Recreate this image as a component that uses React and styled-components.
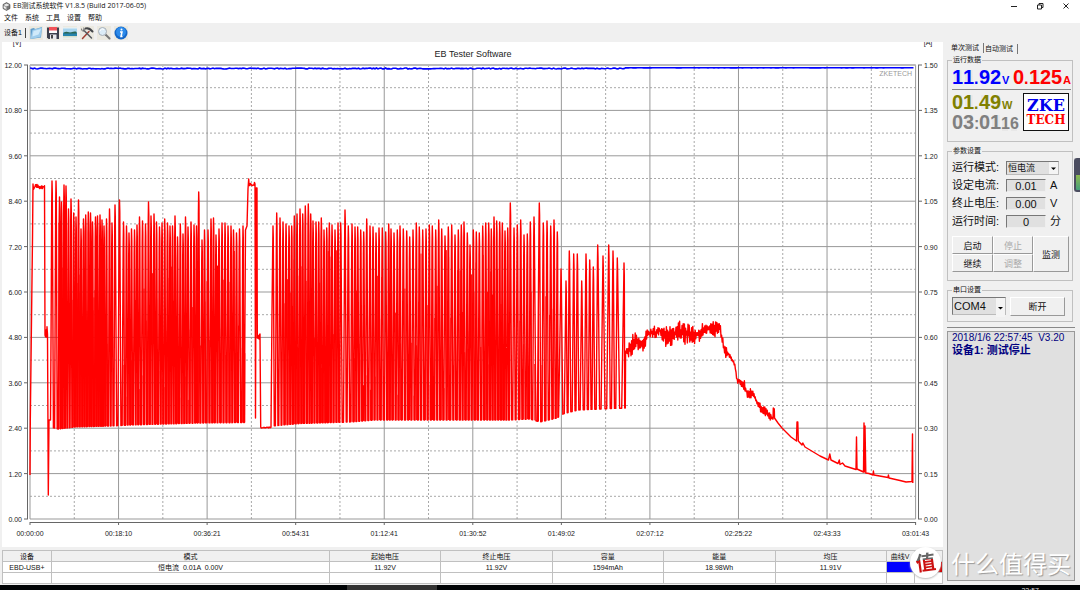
import React, { useState } from "react";
import styled, { createGlobalStyle } from "styled-components";

const GlobalStyle = createGlobalStyle`
  * {
    box-sizing: border-box;
  }

  body {
    margin: 0;
    background: #f0f0f0;
    color: #111;
    font-family: "Liberation Sans", "Noto Sans CJK SC", sans-serif;
    font-size: 7px;
    line-height: 10px;
  }

  button, input, select {
    font-family: inherit;
    color: inherit;
    margin: 0;
    padding: 0;
  }
`;

const MENU = ["文件", "系统", "工具", "设置", "帮助"];

const TIMES = [
  "00:00:00", "00:18:10", "00:36:21", "00:54:31", "01:12:41", "01:30:52",
  "01:49:02", "02:07:12", "02:25:22", "02:43:33", "03:01:43"
];

const COLUMNS = [
  { title: "设备", width: "5.2%", value: "EBD-USB+" },
  { title: "模式", width: "29.6%", value: "恒电流  0.01A  0.00V" },
  { title: "起始电压", width: "11.8%", value: "11.92V" },
  { title: "终止电压", width: "11.9%", value: "11.92V" },
  { title: "容量", width: "11.8%", value: "1594mAh" },
  { title: "能量", width: "11.9%", value: "18.98Wh" },
  { title: "均压", width: "11.8%", value: "11.91V" },
  { title: "曲线V", width: "3%", color: "#0000ff" },
  { title: "", width: "3%", color: "#d00000" }
];

// ---- chart geometry ----
const LEFT = 30;
const TOP = 65;
const RIGHT = 915.6;
const BOTTOM = 519;
const STEP_X = (RIGHT - LEFT) / 10;
const STEP_Y = (BOTTOM - TOP) / 10;

// pulse peaks of the current curve, [x, y]
const PULSES_A = [
  [52, 181], [56, 181], [59.5, 197], [61.5, 202], [64, 185], [66, 186], [68.5, 209],
  [71, 199], [73.7, 213], [76, 217], [78.5, 200], [81, 229], [83.5, 219], [85.7, 215],
  [88.3, 212], [90.5, 213], [92.5, 222], [95.5, 217], [97.5, 216], [100, 215],
  [102, 220], [104, 226], [106.5, 219], [109.5, 209], [112, 223], [115, 205],
  [119.5, 200], [123.5, 222], [126.5, 226], [129, 233], [131.5, 229], [134.5, 230],
  [137, 225], [139.5, 217], [142.5, 221], [145.5, 224], [148.5, 202], [151, 216],
  [154, 214], [156.5, 222], [159.5, 227], [162, 223], [164.7, 219], [167.5, 223],
  [170, 226], [172.5, 226], [175, 216], [177.5, 237], [180.3, 224], [183, 234],
  [185.5, 217], [188, 227], [191, 222], [194, 225], [196.5, 226], [198.7, 192],
  [202, 240], [204.5, 230], [208, 230], [211, 219], [213.5, 218], [216, 235],
  [219, 229], [222, 223], [225, 223], [228, 226], [231, 226], [233.5, 230],
  [236.5, 233], [239.5, 229], [243, 226]
];

const PULSES_B = [
  [273, 226], [276.7, 213], [280, 218], [283, 222], [286, 224], [289, 226], [291.7, 226],
  [294.3, 216], [297, 214], [300, 209], [302.7, 214], [305.3, 206], [308.3, 204],
  [310.7, 214], [313, 221], [316, 222], [318.7, 222], [321.3, 218], [324, 230],
  [326.7, 228], [329.3, 223], [332, 225], [335, 230], [338, 223], [340.7, 223],
  [345, 210], [348.3, 226], [352, 224], [355, 227], [357.7, 227], [360.7, 230],
  [363.7, 232], [366.7, 219], [370, 226], [373, 227], [376, 233], [379, 228],
  [382.3, 228], [385.7, 232], [388.7, 224], [391, 229], [394, 233], [397.3, 230],
  [400, 226], [403.3, 229], [406.7, 231], [409.7, 237], [413, 230], [416.3, 223],
  [419.3, 227], [422.7, 230], [426, 229], [429.3, 225], [432.3, 226], [435.7, 230],
  [438.7, 220], [441.7, 229], [445, 236], [448.3, 227], [451.7, 225], [455, 235],
  [458.3, 230], [461.3, 225], [464, 222], [467.3, 233], [470, 245], [473.3, 230],
  [476.3, 232], [479.3, 233], [482.7, 226], [485.7, 223], [488.7, 223], [491.3, 229],
  [494, 217], [496.7, 221], [499.7, 222], [502.3, 223], [505, 231], [507.7, 228],
  [510.3, 203], [514, 228], [517.3, 225], [520.7, 220], [524, 235], [527.3, 234],
  [530.3, 222], [534, 217], [539.3, 203], [543.3, 223], [547, 221], [550.7, 226],
  [554, 220], [557.3, 232]
];

const PULSES_C = [
  [561, 269], [566, 281], [569.3, 251], [573.7, 254], [577.3, 254], [581.7, 281],
  [586, 254], [589.7, 260], [593.3, 267], [597.7, 245], [603, 256], [608.7, 245],
  [613, 251], [617.3, 258], [624, 263]
];

// lower edge of the pulses
const FLOOR = [
  [50, 427], [58, 429], [75, 427], [110, 426], [130, 425], [200, 423], [246, 422.5],
  [272, 426], [300, 423.5], [350, 422], [375, 420], [510, 420], [530, 419], [540, 422],
  [557, 418], [563, 414], [570, 412], [578, 410], [600, 409], [626, 408]
];

// centre and half height of the noisy tail
const TAIL = [
  [625.5, 352, 8], [631, 347, 9], [635, 340, 10], [641, 343, 8], [645, 340, 11],
  [648, 333, 5], [655, 333, 7], [660, 330, 4], [664, 337, 9], [671, 336, 12],
  [675, 334, 6], [680, 331, 11], [690, 335, 12], [697, 334, 10], [703, 331, 8],
  [708, 328, 4], [712, 330, 8], [716, 330, 11], [720, 328, 5], [723, 343, 4],
  [725, 352, 6], [728, 353, 4], [735, 365, 1], [737, 380, 3], [740, 381, 3],
  [744, 385, 6], [748, 395, 7], [752, 393, 4], [755, 398, 2], [760, 408, 5],
  [767, 413, 5], [771, 418, 3]
];

const DECAY = [
  [773, 419], [773.3, 408], [774.3, 409], [774.5, 418], [778, 423], [782, 428],
  [787, 433], [791, 437], [796.5, 441], [797, 422], [797.8, 422], [798.3, 441],
  [802, 445], [802.8, 443], [805, 447], [810, 450], [815, 453], [820, 456],
  [828.5, 460], [829.8, 454], [831, 460], [838, 463.5], [839.3, 460], [840, 464.5],
  [842.5, 463], [845, 466], [856, 469.5], [856.5, 437], [857, 469], [863.5, 472],
  [864, 423], [864.3, 472], [865, 426], [865.8, 473], [869, 473.5], [873, 475],
  [873.4, 471], [874, 475], [888, 477.5], [888.4, 475], [889, 478], [900, 480.5],
  [906, 482], [912, 481.5], [912.5, 434], [912.8, 483]
];

function createRandom(seed) {
  let value = seed;
  return () => {
    value = (value * 16807) % 2147483647;
    return value / 2147483647;
  };
}

function interpolate(points, x, index) {
  for (let i = 1; i < points.length; i++) {
    const a = points[i - 1];
    const b = points[i];
    if (x <= b[0]) {
      const t = (x - a[0]) / (b[0] - a[0]);
      return a[index] + (b[index] - a[index]) * t;
    }
  }
  return points[points.length - 1][index];
}

function plateau(from, to, y, spread, random) {
  const points = [];
  for (let x = from; x <= to; x += 0.5) {
    points.push([x, y + (random() - 0.5) * spread]);
  }
  return points;
}

function pulses(peaks) {
  const points = [];
  peaks.forEach(([x, y], i) => {
    const next = peaks[i + 1] ? peaks[i + 1][0] : x + 2;
    const width = next - x;
    const from = x + width * 0.35;
    const to = x + width * 0.65;
    points.push([x - 0.3, y + 22], [x, y], [x + 0.3, y + 12]);
    points.push([from, interpolate(FLOOR, from, 1)]);
    points.push([to, interpolate(FLOOR, to, 1)]);
  });
  return points;
}

function toPath(points) {
  return "M" + points.map(([x, y]) => `${x.toFixed(1)} ${y.toFixed(1)}`).join("L");
}

function buildCurrent() {
  const random = createRandom(77);
  const tail = [];
  let side = 1;
  for (let x = 625.6; x < 773; x += 0.6) {
    side = -side;
    const half = interpolate(TAIL, x, 2) * (0.1 + random() * 0.9);
    tail.push([x, interpolate(TAIL, x, 1) + side * half]);
  }
  return toPath([
    [30, 475], [30.3, 420], [31.5, 320], [32.5, 239], [33, 184],
    ...plateau(33.5, 44.5, 187, 5, random),
    [45, 335],
    ...plateau(45.5, 47.5, 332, 11, random),
    [48.3, 495], [49, 420], [50.5, 420], [51.2, 310],
    ...pulses(PULSES_A),
    [245.5, 230], [247, 226], [248, 189], [248.7, 179],
    ...plateau(249, 255, 184, 4, random),
    [255.5, 418], [256.2, 188], [257, 188], [257.3, 338],
    ...plateau(257.5, 260, 337, 7, random),
    [260.7, 427],
    ...plateau(261, 271, 427.5, 1, random),
    [272, 312],
    ...pulses(PULSES_B),
    ...pulses(PULSES_C),
    ...tail,
    ...DECAY
  ]);
}

// partial pulses between the full ones
function buildInner() {
  const random = createRandom(4242);
  let d = "";
  const add = (from, to, step, high, low) => {
    for (let x = from; x < to; x += step) {
      const top = high + random() * (low - high);
      d += `M${x.toFixed(1)} ${top.toFixed(1)}V${interpolate(FLOOR, x, 1).toFixed(1)}`;
    }
  };
  add(59, 64, 1.3, 220, 300);
  add(73, 82, 1, 260, 300);
  add(82, 108, 1, 283, 345);
  add(123, 246, 2.1, 250, 400);
  add(284, 340, 1.7, 250, 370);
  add(352, 484, 2.3, 250, 400);
  add(484, 506, 1.7, 260, 380);
  add(520, 560, 3.7, 250, 400);
  return d;
}

function buildVoltage() {
  const random = createRandom(9);
  const points = [];
  for (let x = LEFT; x < 914; x += 1.5) {
    const base = x < 625 ? 68.5 : 67.8;
    const spread = x < 625 ? 1 : 0.2;
    points.push([x, base + (random() - 0.5) * spread]);
  }
  return toPath(points);
}

const CURRENT = buildCurrent();
const INNER = buildInner();
const VOLTAGE = buildVoltage();

const Chart = () => {
  const steps = Array.from({ length: 11 }, (_, i) => i);
  const halves = steps.slice(0, 10);
  return (
    <Plot viewBox="2 42 941 505" role="img" aria-label="EB Tester Software">
      <text x="17" y="45" textAnchor="middle">[V]</text>
      <text x="928" y="45" textAnchor="middle">[A]</text>
      <text x="473" y="57" textAnchor="middle" fontSize="9">EB Tester Software</text>
      <g stroke="#a8a8a8" strokeDasharray="2 2">
        {halves.map(i => (
          <path key={i} d={`M${LEFT + STEP_X * (i + 0.5)} ${TOP}V${BOTTOM}`} />
        ))}
        {halves.map(i => (
          <path key={i} d={`M${LEFT} ${TOP + STEP_Y * (i + 0.5)}H${RIGHT}`} />
        ))}
      </g>
      <g stroke="#999">
        {steps.map(i => (
          <path key={i} d={`M${LEFT + STEP_X * i} ${TOP}V${BOTTOM}`} />
        ))}
        {steps.map(i => (
          <path key={i} d={`M${LEFT} ${TOP + STEP_Y * i}H${RIGHT}`} />
        ))}
      </g>
      <path d={`M${LEFT} 65H${RIGHT}`} stroke="#bbb" strokeWidth="2" />
      <g stroke="#666" fill="none">
        <path d="M27.5 65V519M918.5 65V519M30 522.5H916" />
        {steps.map(i => (
          <path key={i} d={`M24 ${TOP + STEP_Y * i}H28M918 ${TOP + STEP_Y * i}H922M${LEFT + STEP_X * i} 522V525`} />
        ))}
      </g>
      {steps.map(i => (
        <g key={i}>
          <text x="22" y={TOP + STEP_Y * i + 3} textAnchor="end">{(12 - i * 1.2).toFixed(2)}</text>
          <text x="924" y={TOP + STEP_Y * i + 3}>{(1.5 - i * 0.15).toFixed(2)}</text>
          <text x={LEFT + STEP_X * i} y="536" textAnchor="middle">{TIMES[i]}</text>
        </g>
      ))}
      <text x="912" y="76" textAnchor="end" fill="#999">ZKETECH</text>
      <path d={INNER} fill="none" stroke="#ff0000" strokeWidth="1" />
      <path d={CURRENT} fill="none" stroke="#ff0000" strokeWidth="1.4" strokeLinejoin="round" />
      <path d={VOLTAGE} fill="none" stroke="#0000ff" strokeWidth="1.6" />
    </Plot>
  );
};

const CubeIcon = () => (
  <svg width="9" height="9" viewBox="0 0 18 18">
    <path d="M2 5 9 1l7 4v8l-7 4-7-4z" fill="#777" stroke="#333" />
    <path d="M3 6l6-3 6 3-6 3z" fill="#e8e8e8" />
    <path d="M3 7l6 3v6l-6-4z" fill="#ccc" />
    <path d="M4 9l3 2v2l-3-2z" fill="#fff" />
  </svg>
);

const FolderIcon = () => (
  <svg width="14" height="14" viewBox="0 0 28 28">
    <path d="M3 6 9 4l4 2 13-4-2 21L3 26z" fill="#5f9cca" />
    <path d="M7 8l19-5-3 19L3 26z" fill="#9fcdec" />
    <path d="M9 10l15-4-5 11L7 21z" fill="#d0eafa" />
  </svg>
);

const SaveIcon = () => (
  <svg width="14" height="14" viewBox="0 0 28 28">
    <path d="M2 3h24v23H5l-3-3z" fill="#3c3f4c" />
    <path d="M6 2h16v11H6z" fill="#f0525a" />
    <path d="M6 9h16v5H6z" fill="#fafafa" />
    <path d="M8 17h13v9H8z" fill="#e8e8ec" />
    <path d="M10 18h4v7h-4z" fill="#444" />
  </svg>
);

const PictureIcon = () => (
  <svg width="14" height="14" viewBox="0 0 28 28">
    <path d="M0 3h28v22H0z" fill="#e9f4fa" />
    <path d="M0 5h28v8H0z" fill="#a8d5ef" />
    <path d="M0 13h28v7H0z" fill="#2684ad" />
    <path d="M2 13c4-3 8-1 11 0s9-4 14-1v3H2z" fill="#2c6653" />
    <path d="M0 20h28v3H0z" fill="#d8dfc9" />
  </svg>
);

const ToolsIcon = () => (
  <svg width="14" height="14" viewBox="0 0 28 28" fill="none" strokeLinecap="round">
    <path d="M5 25 18 11" stroke="#a13d31" strokeWidth="3" />
    <path d="M11 5c6-2 9 1 14 6" stroke="#44464a" strokeWidth="4" />
    <path d="M7 8l16 16" stroke="#55595e" strokeWidth="3" />
    <path d="M3 6c0 4 2 5 6 4 1-3 0-5-2-6" stroke="#777" strokeWidth="2" />
  </svg>
);

const SearchIcon = () => (
  <svg width="14" height="14" viewBox="0 0 28 28">
    <path d="M17 17l8 8" stroke="#777" strokeWidth="4" strokeLinecap="round" />
    <circle cx="11" cy="11" r="8" fill="#dcecf7" stroke="#a7aeb6" strokeWidth="2" />
    <path d="M6 10c1-4 5-5 8-3" stroke="#fff" strokeWidth="2" fill="none" />
  </svg>
);

const InfoIcon = () => (
  <svg width="14" height="14" viewBox="0 0 28 28">
    <circle cx="14" cy="14" r="13" fill="#1467c8" />
    <circle cx="14" cy="12" r="10" fill="#2d8bea" />
    <circle cx="15" cy="7" r="2" fill="#fff" />
    <path d="M12 12h4l-2 9h3" stroke="#fff" strokeWidth="3" fill="none" />
  </svg>
);

const TOOLS = [
  { name: "打开", Icon: FolderIcon },
  { name: "保存", Icon: SaveIcon },
  { name: "图片", Icon: PictureIcon },
  { name: "工具", Icon: ToolsIcon },
  { name: "查找", Icon: SearchIcon },
  { name: "关于", Icon: InfoIcon }
];

const Digits = ({ value, color, unit, small }) => (
  <Readout $color={color}>
    {value.split("").map((char, i) =>
      /\d/.test(char) ? (
        <Digit key={i} $small={small && i > 4}>{char}</Digit>
      ) : (
        <Point key={i}>{char}</Point>
      )
    )}
    {unit && <Unit>{unit}</Unit>}
  </Readout>
);

const Dropdown = ({ id, value, wide, label }) => (
  <SelectBox $wide={wide}>
    <Select id={id} defaultValue={value} $wide={wide} aria-label={label}>
      <option>{value}</option>
    </Select>
    <Arrow viewBox="0 0 9 11">
      <path d="M2 5h5L4.500 7.500z" fill="#000" />
    </Arrow>
  </SelectBox>
);

const NumberRow = ({ id, label, unit, initial }) => {
  const [value, setValue] = useState(initial);
  return (
    <Row>
      <Label htmlFor={id}>{label}</Label>
      <Field id={id} value={value} onChange={e => setValue(e.target.value)} />
      <span>{unit}</span>
    </Row>
  );
};

export default function App() {
  return (
    <Window>
      <GlobalStyle />
      <TitleBar>
        <CubeIcon />
        <Title>EB测试系统软件 V1.8.5 (Build 2017-06-05)</Title>
        <WindowButton aria-label="最小化">
          <svg width="8" height="8" viewBox="0 0 8 8"><path d="M1 4.500h6" stroke="#222" /></svg>
        </WindowButton>
        <WindowButton aria-label="还原">
          <svg width="8" height="8" viewBox="0 0 8 8" fill="none" stroke="#222">
            <path d="M1.500 3h4v4h-4zM3 3V1.500h4v4H5.500" />
          </svg>
        </WindowButton>
        <WindowButton aria-label="关闭">
          <svg width="8" height="8" viewBox="0 0 8 8"><path d="M1.500 1.500l5 5m0-5l-5 5" stroke="#222" /></svg>
        </WindowButton>
      </TitleBar>
      <MenuBar>
        {MENU.map(item => <MenuItem key={item}>{item}</MenuItem>)}
      </MenuBar>
      <ToolBar>
        <Device>设备1</Device>
        {TOOLS.map(({ name, Icon }) => (
          <ToolButton key={name} aria-label={name}><Icon /></ToolButton>
        ))}
      </ToolBar>
      <Main>
        <ChartColumn>
          <Chart />
          <Table>
            <colgroup>
              {COLUMNS.map(c => <col key={c.title} style={{ width: c.width }} />)}
            </colgroup>
            <thead>
              <tr>{COLUMNS.map(c => <th key={c.title}>{c.title}</th>)}</tr>
            </thead>
            <tbody>
              <tr>{COLUMNS.map(c => <Cell key={c.title} $color={c.color}>{c.value}</Cell>)}</tr>
              <tr>{COLUMNS.map(c => <Cell key={c.title} />)}</tr>
            </tbody>
          </Table>
        </ChartColumn>
        <Side>
          <Tabs role="tablist">
            <Tab role="tab" aria-selected="true" $active>单次测试</Tab>
            <Tab role="tab" aria-selected="false">自动测试</Tab>
          </Tabs>
          <Group $tight>
            <legend>运行数据</legend>
            <MainReadouts>
              <Digits value="11.92" unit="V" color="#0000ff" />
              <Digits value="0.125" unit="A" color="#ff0000" />
            </MainReadouts>
            <MoreReadouts>
              <div>
                <Digits value="01.49" unit="W" color="#808000" />
                <Digits value="03:0116" color="#808080" small />
              </div>
              <Logo>
                <LogoTop>ZKE</LogoTop>
                <LogoBottom>TECH</LogoBottom>
              </Logo>
            </MoreReadouts>
          </Group>
          <Group>
            <legend>参数设置</legend>
            <Params>
              <Row>
                <Label htmlFor="mode">运行模式:</Label>
                <Dropdown id="mode" value="恒电流" />
              </Row>
              <NumberRow id="current" label="设定电流:" unit="A" initial="0.01" />
              <NumberRow id="voltage" label="终止电压:" unit="V" initial="0.00" />
              <NumberRow id="time" label="运行时间:" unit="分" initial="0" />
            </Params>
            <Actions>
              <ActionButton>启动</ActionButton>
              <ActionButton disabled>停止</ActionButton>
              <ActionButton $tall>监测</ActionButton>
              <ActionButton>继续</ActionButton>
              <ActionButton disabled>调整</ActionButton>
            </Actions>
          </Group>
          <Group>
            <legend>串口设置</legend>
            <PortRow>
              <Dropdown id="port" value="COM4" wide label="串口" />
              <ActionButton>断开</ActionButton>
            </PortRow>
          </Group>
          <Divider />
          <Log>
            <div>2018/1/6 22:57:45&nbsp; V3.20</div>
            <LogState>设备1: 测试停止</LogState>
          </Log>
        </Side>
      </Main>
      <TaskBar>
        <TaskItem />
        <Clock>22:57</Clock>
      </TaskBar>
      <EdgeWidget />
      <Watermark>
        <Badge><BadgeText>值</BadgeText></Badge>
        什么值得买
      </Watermark>
    </Window>
  );
}

const Window = styled.div`
  position: relative;
  display: flex;
  flex-direction: column;
  min-height: 100vh;
  overflow: hidden;
`;

const TitleBar = styled.header`
  display: flex;
  align-items: center;
  height: 12px;
  padding: 0 10px 0 2px;
  gap: 2px;
  background: #fff;
`;

const Title = styled.div`
  flex: 1;
  font-family: "Open Sans", "Noto Sans CJK SC", sans-serif;
`;

const WindowButton = styled.button`
  display: flex;
  margin-left: 16px;
  border: 0;
  background: none;
`;

const MenuBar = styled.nav`
  display: flex;
  gap: 7px;
  height: 11px;
  padding-left: 4px;
  background: #fff;
`;

const MenuItem = styled.button`
  border: 0;
  background: none;
  font-size: 7px;
  line-height: 12px;
`;

const ToolBar = styled.div`
  display: flex;
  align-items: center;
  height: 19px;
  padding-left: 4px;
`;

const Device = styled.div`
  width: 22px;
  margin-right: 3px;
  border-right: 1px solid #444;
  white-space: nowrap;
`;

const ToolButton = styled.button`
  display: flex;
  margin-right: 3px;
  border: 0;
  background: #ebe9e0;
`;

const Main = styled.main`
  display: flex;
  flex: 1;
  padding-left: 2px;
`;

const ChartColumn = styled.div`
  flex: 1;
  min-width: 0;
`;

const Plot = styled.svg`
  display: block;
  width: 100%;
  margin-bottom: 3px;
  overflow: hidden;
  background: #fff;

  text {
    fill: #222;
  }

  text[fill] {
    fill: #999;
  }
`;

const Table = styled.table`
  width: 100%;
  table-layout: fixed;
  border-collapse: collapse;
  border: 1px solid #888;
  background: #fff;
  text-align: center;
  white-space: pre;

  th {
    height: 11px;
    padding: 0;
    border: 1px solid #c0c0c0;
    background: #f0f0f0;
    font-weight: 400;
    line-height: 9px;
  }
`;

const Cell = styled.td`
  height: 11px;
  padding: 0;
  border: 1px solid #c0c0c0;
  background: ${p => p.$color || "#fff"};
  line-height: 9px;
`;

const Side = styled.aside`
  display: flex;
  flex-direction: column;
  width: 137px;
  padding: 0 5px 4px 4px;
`;

const Tabs = styled.div`
  display: flex;
  height: 14px;
  padding-left: 3px;
`;

const Tab = styled.button`
  width: 34px;
  height: 10px;
  margin-top: ${p => (p.$active ? 1 : 2)}px;
  padding-left: 1px;
  border: 0;
  border-right: 1px solid #777;
  background: none;
  font-size: 7px;
  line-height: 10px;
  text-align: left;
`;

const Group = styled.fieldset`
  min-width: 0;
  margin: 0 2px 5px 0;
  padding: ${p => (p.$tight ? "3px 1px 9px 4px" : "0 3px 3px 4px")};
  border: 1px solid #c0c0c0;

  legend {
    padding: 0 1px;
    line-height: 8px;
  }
`;

const MainReadouts = styled.div`
  display: flex;
  justify-content: space-between;
  margin-bottom: 2px;
  padding-bottom: 2px;
  border-bottom: 1px solid #888;
`;

const MoreReadouts = styled.div`
  display: flex;
  justify-content: space-between;
  padding: 0 2px 0 0;
`;

const Readout = styled.div`
  display: flex;
  align-items: baseline;
  height: 20px;
  color: ${p => p.$color};
`;

const Digit = styled.span`
  width: ${p => (p.$small ? 9 : 11)}px;
  background: linear-gradient(#e8e8e8, #e8e8e8) center / 70% 70% no-repeat;
  font-size: ${p => (p.$small ? 16 : 20)}px;
  font-weight: 700;
  line-height: 20px;
`;

const Point = styled.span`
  width: 5px;
  font-size: 16px;
  font-weight: 700;
  line-height: 20px;
`;

const Unit = styled.span`
  margin-left: 1px;
  font-size: 11px;
  font-weight: 700;
`;

const Logo = styled.div`
  width: 46px;
  height: 38px;
  margin-top: 1px;
  padding-top: 3px;
  border: 1px solid #111;
  background: #fff;
  font-family: "DejaVu Serif", serif;
  font-weight: 700;
  text-align: center;
`;

const LogoTop = styled.div`
  color: #0000ee;
  font-size: 16px;
  line-height: 17px;
`;

const LogoBottom = styled.div`
  color: #ff0000;
  font-size: 12px;
  line-height: 13px;
`;

const Params = styled.div`
  display: grid;
  gap: 5px;
  padding-top: 6px;
`;

const Row = styled.div`
  display: grid;
  grid-template-columns: 50px 40px 1fr;
  column-gap: 4px;
  height: 13px;
  font-size: 11px;
  line-height: 13px;
`;

const Label = styled.label`
  white-space: nowrap;
`;

const Field = styled.input`
  width: 100%;
  height: 13px;
  border: 1px solid;
  border-color: #777 #eee #eee #777;
  background: #e0e0e0;
  font-size: 11px;
  text-align: center;
`;

const SelectBox = styled.div`
  position: relative;
  width: ${p => (p.$wide ? 54 : 53)}px;
`;

const Select = styled.select`
  display: block;
  width: 100%;
  height: ${p => (p.$wide ? 18 : 14)}px;
  padding-left: 1px;
  appearance: none;
  border: 1px solid;
  border-color: #777 #bbb #bbb #777;
  border-radius: 0;
  background: #e0e0e0;
  font-size: ${p => (p.$wide ? 11 : 9)}px;
`;

const Arrow = styled.svg`
  position: absolute;
  top: 1px;
  right: 1px;
  width: 9px;
  height: calc(100% - 2px);
  background: #f4f4f4;
  pointer-events: none;
`;

const Actions = styled.div`
  display: grid;
  grid-template-columns: 41px 40px 1fr;
  grid-auto-rows: 18px;
  padding: 8px 0 5px;
`;

const ActionButton = styled.button`
  grid-row: ${p => (p.$tall ? "1 / span 2" : "auto")};
  grid-column: ${p => (p.$tall ? 3 : "auto")};
  border: 1px solid;
  border-color: #fff #999 #999 #fff;
  background: #f0f0f0;
  font-size: 9px;

  &:disabled {
    color: #aaa;
  }
`;

const PortRow = styled.div`
  display: grid;
  grid-template-columns: 54px 55px;
  gap: 4px;
  height: 24px;
  padding-top: 3px;

  button {
    height: 19px;
  }
`;

const Divider = styled.hr`
  width: 100%;
  margin: 0 0 3px;
  border: 0;
  border-top: 1px solid #888;
`;

const Log = styled.section`
  flex: 1;
  padding: 0 4px;
  border: 1px solid #999;
  background: #e0e0e0;
  color: #000080;
  font-size: 10px;
  line-height: 12px;
  white-space: nowrap;
`;

const LogState = styled.div`
  font-size: 11px;
  font-weight: 700;
`;

const TaskBar = styled.footer`
  display: flex;
  justify-content: space-between;
  height: 5px;
  padding: 0 41px 0 32.100%;
  overflow: hidden;
  background: #000305;
`;

const TaskItem = styled.div`
  width: 90px;
  background: #333;
`;

const Clock = styled.time`
  padding-top: 2px;
  color: #ddd;
  line-height: 8px;
`;

const EdgeWidget = styled.div`
  position: absolute;
  top: 158px;
  right: 0;
  width: 6px;
  height: 34px;
  border: 2px solid #4b4d60;
  border-right: 0;
  border-radius: 3px 0 0 3px;
  background: linear-gradient(#4b4d60 50%, #8db84e 50%, #45a07c);
`;

const Watermark = styled.div`
  position: absolute;
  right: 9px;
  bottom: 12px;
  display: flex;
  align-items: center;
  gap: 10px;
  color: #fff;
  font-family: "Noto Sans CJK SC", sans-serif;
  font-size: 24px;
  line-height: 31px;
  text-shadow: 1px 1px 1px #999;
`;

const Badge = styled.span`
  width: 31px;
  height: 31px;
  border-radius: 50%;
  background: #fff;
  box-shadow: 0 1px 2px #bbb;
  font-size: 20px;
  font-weight: 700;
  line-height: 30px;
  text-align: center;
  text-shadow: none;
`;

const BadgeText = styled.span`
  display: block;
  background: linear-gradient(#666 42%, #cc1010 42%);
  background-clip: text;
  color: transparent;
  transform: rotate(-8deg);
`;
